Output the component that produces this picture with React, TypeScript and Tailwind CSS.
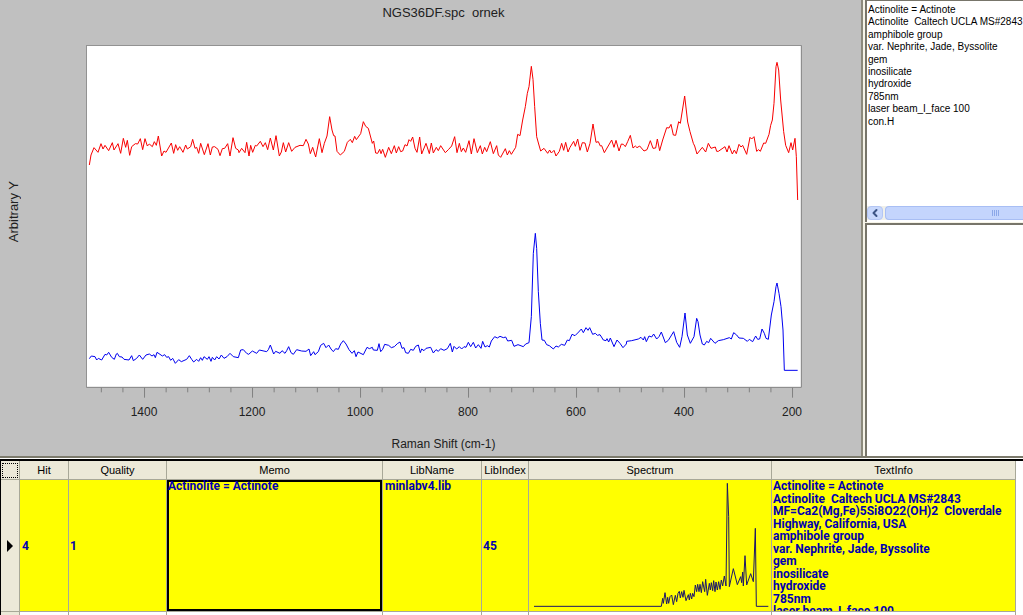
import { ReactNode } from "react";
import { ChevronLeft } from "lucide-react";
import { clsx } from "clsx";

// Traces are stored in sections, three units per pixel, each with its own origin
interface Section {
  x: number;
  y: number;
  points: string;
}

const SAMPLE: Section[] = [
  {
    x: -18,
    y: -15,
    points:
      "28,375 33,345 42,323 54,337 63,311 69,327 75,316 86,332 97,308 102,330 114,311 122,340 130,295 137,322 142,301 149,346 155,320 166,311 173,312 181,296 188,329 195,296 202,318 208,312 217,320 223,305 229,316 235,288 245,348 252,333 258,337 274,309 281,340 287,314 293,331 299,320 309,337 317,315 322,327 332,320 338,298 345,325 350,322 356,340 362,310 373,344 384,311 391,345 397,321 404,320 414,328 420,347 427,326 434,325 443,311 450,348 459,293 467,325 475,330 477,338 485,325 495,338 500,307 507,348 512,316 518,337 526,316 530,318 541,304 549,320 556,308 563,329 571,294 580,330 588,287 598,348 604,336 610,308 617,336 626,308 635,334 645,322 660,316 670,317 678,298 685,312 691,341 698,322 707,351 718,296 726,338 733,310 741,288 749,230",
  },
  {
    x: 702,
    y: -15,
    points:
      "29,230 36,270 41,287 45,288 51,334 61,345 73,334 82,307 91,298 97,308 104,289 109,299 122,281 130,245 137,259 145,265 157,310 161,303 167,339 173,340 179,328 183,341 188,328 196,352 206,322 214,341 223,317 229,339 236,320 242,335 248,333 255,314 261,318 267,299 272,304 278,291 285,325 291,337 299,291 305,342 318,310 328,341 334,309 340,339 349,322 355,332 362,317 376,338 386,328 395,318 404,290 411,338 418,310 424,335 430,324 437,337 447,302 454,342 462,296 472,338 481,317 487,342 494,322 500,335 511,305 520,341 530,317 535,345 542,352 556,326 562,345 568,332 574,343 587,322 593,283 600,287 608,240 616,200 622,160 627,140 634,79 639,118 644,200 650,290 656,312 662,333 672,325 683,340 689,330 694,339 702,331 708,348 718,334 725,310 731,331 737,307 744,336",
  },
  {
    x: 1422,
    y: -15,
    points:
      "24,336 30,322 41,304 46,319 53,297 60,331 67,308 75,309 82,336 90,310 99,252 108,307 115,305 121,318 125,317 133,338 155,300 162,322 168,301 177,333 184,312 190,313 196,320 203,305 211,286 219,324 226,318 231,323 239,318 252,333 261,329 271,302 279,325 287,324 292,297 299,332 308,300 320,263 327,264 333,253 340,285 347,286 356,245 361,250 374,168 383,246 390,275 400,310 404,318 411,342 427,322 437,336 445,310 453,325 466,321 470,334 475,334 495,320 501,336 507,317 517,342 523,330 529,341 537,313 543,321 548,316 560,343 570,292 575,297 582,290 590,334 596,329 601,334 611,309 617,310 627,283 632,256 637,240 642,190 648,80 651,67 656,90 662,180 671,275 677,316 686,338 693,308 698,330 705,295 709,350 713,480",
  },
];

const LIBRARY: Section[] = [
  {
    x: -18,
    y: 765,
    points:
      "28,176 34,168 45,170 50,180 55,175 65,180 75,163 80,165 86,157 95,172 103,178 109,162 112,160 118,170 126,171 132,178 147,180 155,167 160,182 170,175 178,165 188,178 198,165 208,162 216,168 222,164 226,173 231,157 240,163 247,168 254,164 260,172 266,170 272,181 278,175 286,190 296,179 304,185 320,178 328,167 335,178 341,186 350,178 356,184 362,173 367,181 372,170 382,178 387,170 393,184 397,172 404,180 410,170 417,177 424,165 432,175 441,170 450,160 460,170 475,173 482,150 490,149 500,160 506,163 517,153 530,160 538,150 560,155 565,149 571,135 581,162 587,154 600,160 606,152 615,160 620,152 626,140 633,158 640,163 650,149 665,153 678,154 687,147 692,167 701,155 705,164 715,155 722,136 731,130 738,143 746,135",
  },
  {
    x: 702,
    y: 525,
    points:
      "26,375 33,387 40,395 47,386 55,388 62,372 70,362 78,372 87,389 96,400 103,392 108,410 114,396 130,404 141,382 148,386 157,382 160,390 172,391 177,371 182,395 188,388 194,373 206,376 214,383 223,380 232,371 240,366 246,385 252,383 257,398 265,400 272,388 280,391 287,379 295,375 301,398 305,387 312,392 318,385 332,382 340,399 348,389 355,394 362,386 372,391 382,386 391,370 397,396 402,379 410,387 418,380 425,387 432,380 438,382 445,367 452,380 460,367 467,384 475,374 483,385 488,364 495,381 502,377 508,381 514,363 524,350 532,354 540,349 550,353 557,351 563,363 575,361 582,379 594,374 610,380 617,372 627,368 634,290 640,100 646,40 650,85 655,215 661,310 666,360 673,361 680,374 688,377 700,387 708,378 715,381 724,373 734,376",
  },
  {
    x: 1422,
    y: 675,
    points:
      "14,226 22,210 28,212 36,193 45,197 56,186 64,177 70,188 78,173 84,181 89,173 98,193 106,190 112,196 120,194 130,210 138,212 141,206 146,216 151,204 162,230 171,210 180,220 189,233 199,222 200,214 215,212 235,207 243,202 250,210 254,200 259,215 267,198 275,201 281,192 290,207 297,200 304,186 316,218 325,211 341,185 350,217 359,232 366,200 375,129 382,195 391,220 402,200 410,145 414,155 420,195 427,222 433,225 440,214 446,218 452,205 465,220 475,212 490,209 508,203 514,207 521,188 530,195 537,204 550,205 562,214 568,208 578,215 587,198 593,208 599,207 606,177 613,190 618,205 625,208 634,135 642,95 648,50 651,39 657,70 663,110 669,180 673,301 713,301",
  },
];

const THUMBNAIL =
  "42,469 424,469 428,445 430,460 435,428 440,462 443,442 446,460 450,440 455,435 460,464 466,436 470,455 474,430 478,424 481,444 485,425 489,442 492,421 498,452 505,434 508,450 511,430 515,447 518,430 522,440 526,405 530,425 533,403 537,425 540,403 544,428 548,395 554,425 557,388 562,436 568,400 571,420 574,398 578,422 581,392 585,425 588,396 592,420 596,395 600,418 604,390 608,408 613,378 618,408 622,100 626,200 628,410 640,356 652,404 662,380 665,398 668,366 670,408 675,317 680,405 692,371 700,395 706,235 709,469 745,469";

const X_LABELS = ["1400", "1200", "1000", "800", "600", "400", "200"];

const MEMO_LINES = [
  "Actinolite = Actinote",
  "Actinolite  Caltech UCLA MS#2843",
  "amphibole group",
  "var. Nephrite, Jade, Byssolite",
  "gem",
  "inosilicate",
  "hydroxide",
  "785nm",
  "laser beam_I_face 100",
  "con.H",
];

const TEXT_INFO = [
  "Actinolite = Actinote",
  "Actinolite  Caltech UCLA MS#2843",
  "MF=Ca2(Mg,Fe)5Si8O22(OH)2  Cloverdale",
  "Highway, California, USA",
  "amphibole group",
  "var. Nephrite, Jade, Byssolite",
  "gem",
  "inosilicate",
  "hydroxide",
  "785nm",
  "laser beam_I_face 100",
];

const COLUMNS = [
  { name: "Hit", width: "w-[49px]" },
  { name: "Quality", width: "w-[98px]" },
  { name: "Memo", width: "w-[216px]" },
  { name: "LibName", width: "w-[99px]" },
  { name: "LibIndex", width: "w-[47px]" },
  { name: "Spectrum", width: "w-[243px]" },
  { name: "TextInfo", width: "w-[244px]" },
];

function Trace({ sections, color }: { sections: Section[]; color: string }) {
  return (
    <>
      {sections.map((s) => (
        <polyline
          key={s.x}
          transform={`translate(${s.x} ${s.y})`}
          points={s.points}
          fill="none"
          stroke={color}
          strokeWidth={1}
          vectorEffect="non-scaling-stroke"
        />
      ))}
    </>
  );
}

function Plot() {
  const ticks = Array.from({ length: 33 }, (_, i) => ({
    x: 46 + i * 64.8,
    major: i % 5 === 2,
  }));

  return (
    <svg
      className="block min-h-0 w-full flex-1"
      viewBox="0 0 2148 1059"
      preserveAspectRatio="none"
      role="img"
      aria-label="Raman spectra"
    >
      <rect x="1" y="1" width="2145" height="1026" fill="#fff" stroke="#808080" vectorEffect="non-scaling-stroke" />
      {ticks.map((t) => (
        <line
          key={t.x}
          x1={t.x}
          x2={t.x}
          y1={1028}
          y2={t.major ? 1058 : 1042}
          stroke="#808080"
          vectorEffect="non-scaling-stroke"
        />
      ))}
      <Trace sections={SAMPLE} color="#f80000" />
      <Trace sections={LIBRARY} color="#0000f0" />
    </svg>
  );
}

function ChartPanel() {
  return (
    <main className="flex min-w-0 flex-1 bg-[#c0c0c0] text-xs text-[#202020]">
      <div className="flex w-[86px] shrink-0 items-center pb-8 pl-1.5">
        <span className="rotate-180 text-[13px] leading-4 [writing-mode:vertical-rl]">Arbitrary Y</span>
      </div>
      <div className="flex min-w-0 flex-1 flex-col">
        <h1 className="h-[45px] shrink-0 pt-[5px] pr-[60px] text-center text-[13px] leading-4 whitespace-pre">
          NGS36DF.spc  ornek
        </h1>
        <div className="flex min-h-0 flex-1 flex-col pr-[59px]">
          <Plot />
        </div>
        <div className="flex pt-1.5 pr-[15px] pl-1">
          {X_LABELS.map((label) => (
            <span key={label} className="flex-1 text-center">
              {label}
            </span>
          ))}
        </div>
        <div className="pt-4 pr-[60px] pb-1 text-center">Raman Shift (cm-1)</div>
      </div>
    </main>
  );
}

function InfoPanel() {
  return (
    <aside className="flex w-[162px] shrink-0 flex-col overflow-hidden border-l-2 border-[#8c8a7c] bg-[#f6f4e8] pl-0.5">
      <div className="flex h-[222px] flex-col border-t border-l-2 border-[#77756a] bg-white">
        <ul className="grid h-[127px] auto-rows-fr pt-[3px] pl-px text-[10px] leading-[12px] whitespace-pre text-black">
          {MEMO_LINES.map((line) => (
            <li key={line}>{line}</li>
          ))}
        </ul>
        <div className="mt-auto mb-0.5 flex h-[14px] bg-[#f0f0ea]">
          <button
            type="button"
            aria-label="Scroll left"
            className="flex w-4 shrink-0 items-center justify-center rounded-sm border border-[#b4c6f4] bg-[#c8d8fc] text-[#3c5484]"
          >
            <ChevronLeft size={12} strokeWidth={4} />
          </button>
          <div className="ml-0.5 flex flex-1 items-center justify-end rounded-l-sm border border-r-0 border-[#a8bef4] bg-[#c4d5fd] pr-6">
            <div className="flex gap-px">
              {[0, 1, 2, 3].map((i) => (
                <div key={i} className="h-1.5 w-px bg-[#8ca8e8]" />
              ))}
            </div>
          </div>
        </div>
      </div>
      <div className="mt-px flex-1 border-t-2 border-l-2 border-[#77756a] bg-white" />
    </aside>
  );
}

function Cell({ children, className }: { children?: ReactNode; className?: string }) {
  return (
    <td className={clsx("border-r border-b border-[#a8a898] p-0", className)}>{children}</td>
  );
}

function HitTable() {
  return (
    <section className="h-[159px] shrink-0 overflow-hidden border-t-2 border-[#7c7a6c] bg-white pt-px">
      <table className="w-full table-fixed border-separate border-spacing-0 border-t-2 border-l border-black text-[11px] leading-[12px]">
        <thead>
          <tr className="h-[19px] bg-[#ece9d8] text-black">
            <th className="w-[19px] border-r border-b border-[#a8a898] p-px" aria-label="Row">
              <div className="h-[15px] border border-dotted border-black" />
            </th>
            {COLUMNS.map((c) => (
              <th key={c.name} className={clsx("border-r border-b border-[#a8a898] p-0 font-normal", c.width)}>
                {c.name}
              </th>
            ))}
            <th className="bg-white p-0" aria-label="Blank" />
          </tr>
        </thead>
        <tbody>
          <tr className="bg-[#ffff00] font-[Roboto,'Liberation_Sans',sans-serif] text-[12px] font-bold text-[#0000b0]">
            <Cell className="bg-[#ece9d8]">
              <svg className="mx-auto block h-3 w-1.5" viewBox="0 0 6 12">
                <path d="M0 0 L6 6 L0 12 Z" fill="#000" />
              </svg>
            </Cell>
            <Cell className="pl-0.5">4</Cell>
            <Cell className="pl-px">1</Cell>
            <Cell className="align-top shadow-[inset_0_0_0_2px_#000]">
              <div className="pl-px">Actinolite = Actinote</div>
            </Cell>
            <Cell className="align-top">
              <div className="pl-0.5">minlabv4.lib</div>
            </Cell>
            <Cell className="pl-px">45</Cell>
            <Cell>
              <svg className="block h-[131px] w-full" viewBox="27 90 726 393" preserveAspectRatio="none">
                <polyline
                  points={THUMBNAIL}
                  fill="none"
                  stroke="#1c1868"
                  strokeWidth={1}
                  vectorEffect="non-scaling-stroke"
                />
              </svg>
            </Cell>
            <Cell>
              <div className="h-[131px] overflow-hidden pl-px">
                <ul className="grid h-[138px] auto-rows-fr whitespace-pre">
                  {TEXT_INFO.map((line) => (
                    <li key={line}>{line}</li>
                  ))}
                </ul>
              </div>
            </Cell>
            <td className="bg-white p-0" />
          </tr>
          <tr className="h-[132px] align-top text-black">
            <Cell className="bg-[#ece9d8]" />
            <Cell />
            <Cell />
            <Cell className="pt-px pl-0.5">Actinolite = Actinote</Cell>
            <Cell className="pt-px pl-0.5">minlabv4.lib</Cell>
            <Cell />
            <Cell />
            <Cell className="pt-px pl-0.5">Actinolite = Actinote</Cell>
            <td className="p-0" />
          </tr>
        </tbody>
      </table>
    </section>
  );
}

export default function App() {
  return (
    <div className="flex h-screen flex-col overflow-hidden bg-white font-['Liberation_Sans',Arial,sans-serif]">
      <div className="flex min-h-0 flex-1">
        <ChartPanel />
        <InfoPanel />
      </div>
      <HitTable />
    </div>
  );
}
